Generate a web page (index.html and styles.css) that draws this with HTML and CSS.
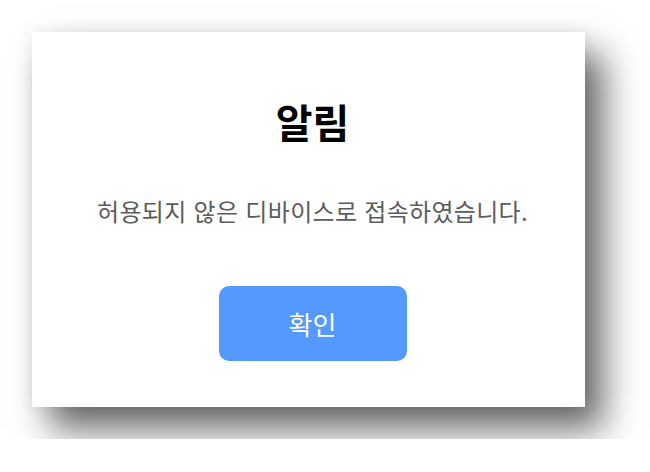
FILE: index.html
```html
<!DOCTYPE html>
<html lang="ko">
<head>
  <meta charset="UTF-8">
  <meta name="viewport" content="width=device-width, initial-scale=1.0">
  <title>알림</title>
  <link rel="stylesheet" href="styles.css">
</head>
<body>
  <div class="dialog">
    <h1 class="dialog-title">알림</h1>
    <p class="dialog-message">허용되지 않은 디바이스로 접속하였습니다.</p>
    <button class="dialog-button">확인</button>
  </div>
</body>
</html>
```

FILE: styles.css
```css
* {
  margin: 0;
  padding: 0;
  box-sizing: border-box;
}
body {
  background-color: #fff;
  padding: 32px;
  font-family: "Noto Sans CJK KR", "Noto Sans", sans-serif;
}
.dialog {
  width: 553px;
  height: 375px;
  background-color: #fff;
  display: flex;
  flex-direction: column;
  align-items: center;
  padding: 67px 0 0 8px;
  box-shadow: 18px 22px 34px rgba(0, 0, 0, 0.6), 0 0 16px rgba(0, 0, 0, 0.07);
}
.dialog-title {
  font-size: 40px;
  font-weight: 700;
  line-height: 44px;
  color: #000;
}
.dialog-message {
  margin-top: 53px;
  font-size: 24px;
  line-height: 30px;
  letter-spacing: 0.3px;
  color: #5c5c5c;
}
.dialog-button {
  margin-top: 60px;
  width: 188px;
  height: 75px;
  border: none;
  border-radius: 10px;
  background-color: #5499fd;
  color: #fff;
  font-family: inherit;
  font-size: 26px;
}
```
